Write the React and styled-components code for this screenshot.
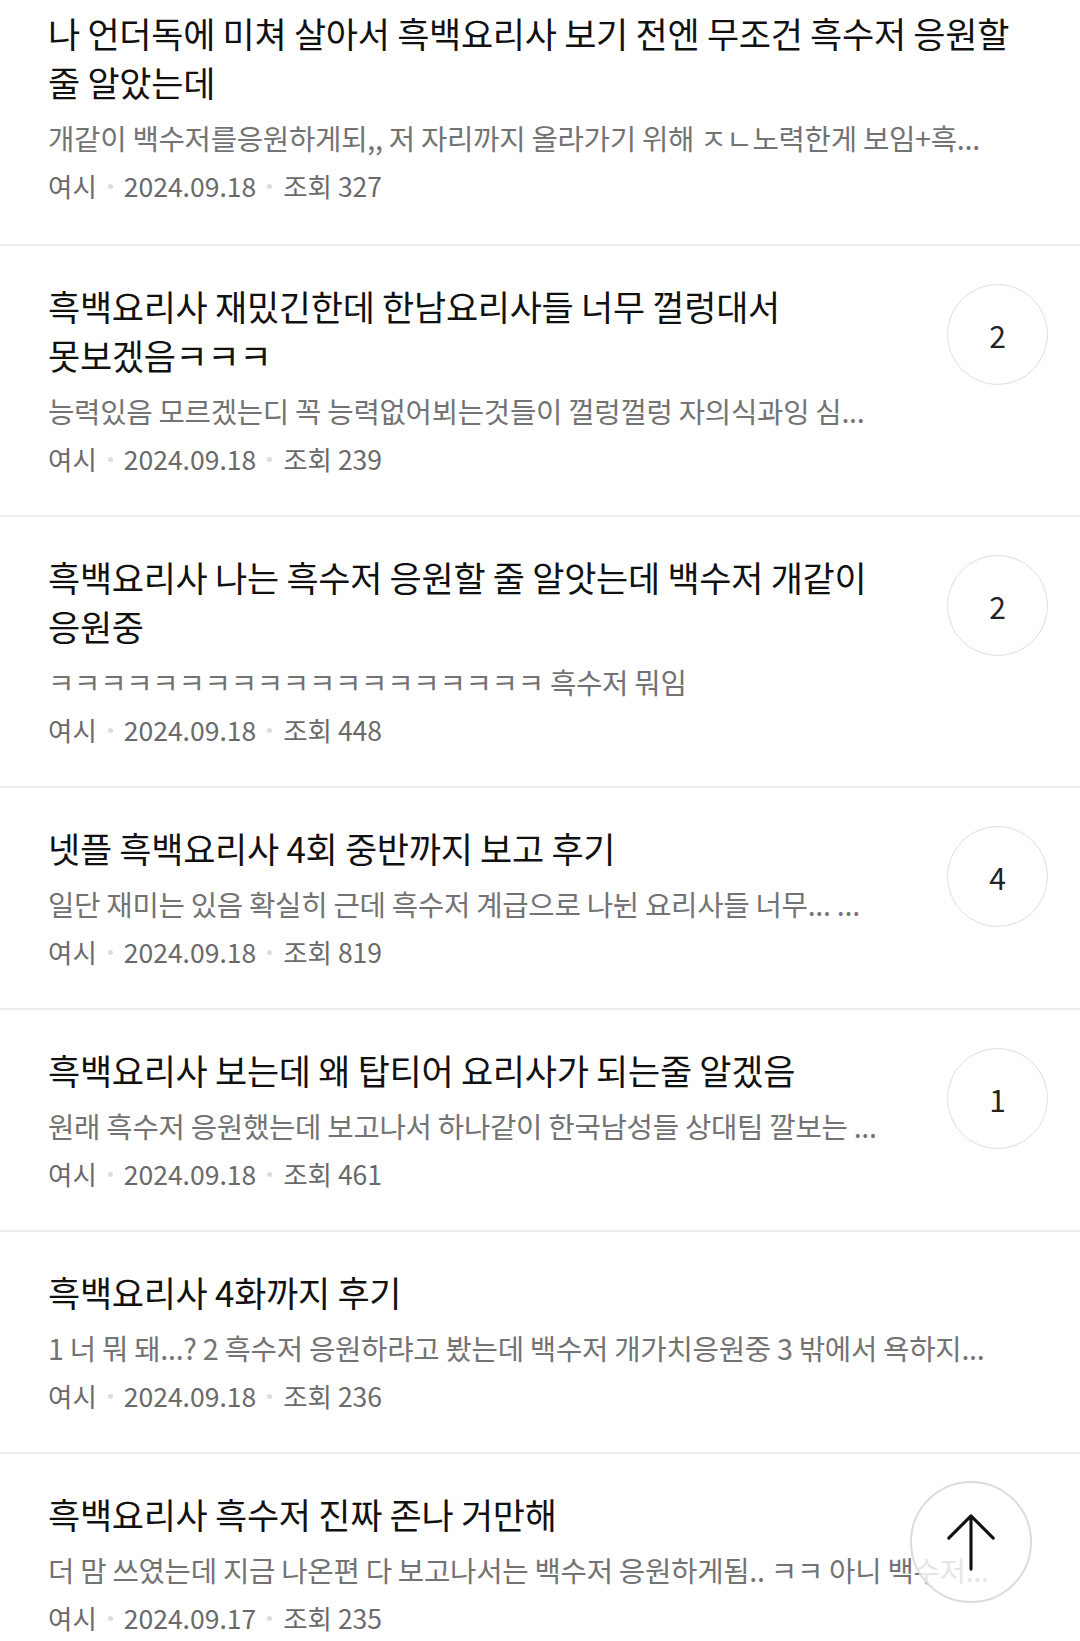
import React from 'react';
import styled, { createGlobalStyle } from 'styled-components';

const GlobalStyle = createGlobalStyle`
  html, body {
    margin: 0;
    padding: 0;
    background: #fff;
  }
  body {
    font-family: "Noto Sans CJK KR", "Noto Sans", sans-serif;
    color: #111;
    overflow: hidden;
  }
`;

const Page = styled.div`
  width: 1080px;
  height: 1641px;
  overflow: hidden;
  background: #fff;
`;

const List = styled.ul`
  list-style: none;
  margin: 0;
  padding: 0;
`;

const Item = styled.li`
  display: flex;
  align-items: flex-start;
  padding: 35px 32px 38px 48px;
  border-top: 2px solid #ececec;
  &:first-child {
    border-top: none;
    padding-top: 8px;
    padding-bottom: 40px;
  }
`;

const Body = styled.div`
  flex: 1;
  min-width: 0;
  padding-right: ${(p) => (p.$withBadge ? '40px' : '16px')};
`;

const Title = styled.div`
  font-size: 35px;
  line-height: 49px;
  color: #111;
  letter-spacing: -0.3px;
  word-break: keep-all;
`;

const Snippet = styled.div`
  margin-top: 12px;
  font-size: 28.7px;
  line-height: 40px;
  color: #737373;
  white-space: nowrap;
  overflow: hidden;
  text-overflow: ellipsis;
  letter-spacing: -0.3px;
`;

const Meta = styled.div`
  margin-top: 10px;
  display: flex;
  align-items: center;
  font-size: 26.5px;
  line-height: 36px;
  color: #6a6a6a;
`;

const Dot = styled.span`
  width: 5px;
  height: 5px;
  border-radius: 50%;
  background: #dcdcdc;
  margin: 0 11px;
`;

const Badge = styled.div`
  flex: none;
  width: 101px;
  height: 101px;
  margin-top: 3px;
  border-radius: 50%;
  border: 1.5px solid #dedede;
  box-sizing: border-box;
  display: flex;
  align-items: center;
  justify-content: center;
  font-size: 30px;
  color: #222;
`;

const TopButton = styled.button`
  position: fixed;
  right: 48px;
  bottom: 38px;
  width: 122px;
  height: 122px;
  padding: 0;
  border-radius: 50%;
  border: 2px solid #dcdcdc;
  background: rgba(255, 255, 255, 0.82);
  display: flex;
  align-items: center;
  justify-content: center;
  cursor: pointer;
`;

const posts = [
  {
    title: '나 언더독에 미쳐 살아서 흑백요리사 보기 전엔 무조건 흑수저 응원할 줄 알았는데',
    snippet: '개같이 백수저를응원하게되,, 저 자리까지 올라가기 위해 ㅈㄴ노력한게 보임+흑...',
    date: '2024.09.18',
    views: 327,
  },
  {
    title: '흑백요리사 재밌긴한데 한남요리사들 너무 껄렁대서 못보겠음ㅋㅋㅋ',
    snippet: '능력있음 모르겠는디 꼭 능력없어뵈는것들이 껄렁껄렁 자의식과잉 심...',
    date: '2024.09.18',
    views: 239,
    comments: 2,
  },
  {
    title: '흑백요리사 나는 흑수저 응원할 줄 알앗는데 백수저 개같이 응원중',
    snippet: 'ㅋㅋㅋㅋㅋㅋㅋㅋㅋㅋㅋㅋㅋㅋㅋㅋㅋㅋㅋ 흑수저 뭐임',
    date: '2024.09.18',
    views: 448,
    comments: 2,
  },
  {
    title: '넷플 흑백요리사 4회 중반까지 보고 후기',
    snippet: '일단 재미는 있음 확실히 근데 흑수저 계급으로 나뉜 요리사들 너무... ...',
    date: '2024.09.18',
    views: 819,
    comments: 4,
  },
  {
    title: '흑백요리사 보는데 왜 탑티어 요리사가 되는줄 알겠음',
    snippet: '원래 흑수저 응원했는데 보고나서 하나같이 한국남성들 상대팀 깔보는 ...',
    date: '2024.09.18',
    views: 461,
    comments: 1,
  },
  {
    title: '흑백요리사 4화까지 후기',
    snippet: '1 너 뭐 돼...? 2 흑수저 응원하랴고 봤는데 백수저 개가치응원중 3 밖에서 욕하지...',
    date: '2024.09.18',
    views: 236,
  },
  {
    title: '흑백요리사 흑수저 진짜 존나 거만해',
    snippet: '더 맘 쓰였는데 지금 나온편 다 보고나서는 백수저 응원하게됨.. ㅋㅋ 아니 백수저...',
    date: '2024.09.17',
    views: 235,
  },
];

function ArrowUp() {
  return (
    <svg width="122" height="122" viewBox="0 0 122 122" fill="none">
      <path
        d="M61 34 L61 89 M38 57 L61 34 L84 57"
        stroke="#111"
        strokeWidth="3.2"
        strokeLinecap="round"
        strokeLinejoin="round"
      />
    </svg>
  );
}

export default function App() {
  return (
    <Page>
      <GlobalStyle />
      <List>
        {posts.map((post, i) => (
          <Item key={i}>
            <Body $withBadge={post.comments != null}>
              <Title>{post.title}</Title>
              <Snippet>{post.snippet}</Snippet>
              <Meta>
                <span>여시</span>
                <Dot />
                <span>{post.date}</span>
                <Dot />
                <span>조회 {post.views}</span>
              </Meta>
            </Body>
            {post.comments != null && <Badge>{post.comments}</Badge>}
          </Item>
        ))}
      </List>
      <TopButton aria-label="맨 위로">
        <ArrowUp />
      </TopButton>
    </Page>
  );
}
